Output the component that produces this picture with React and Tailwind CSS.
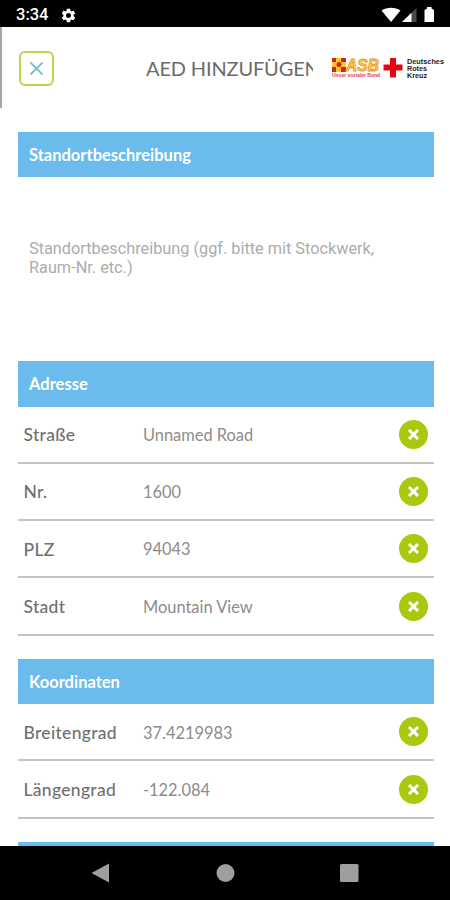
import React from "react";
import { MdSettings } from "react-icons/md";

const addressFields = [
    { label: "Straße", value: "Unnamed Road" },
    { label: "Nr.", value: "1600" },
    { label: "PLZ", value: "94043" },
    { label: "Stadt", value: "Mountain View" },
];

const coordinateFields = [
    { label: "Breitengrad", value: "37.4219983" },
    { label: "Längengrad", value: "-122.084" },
];

function StatusBar() {
    return (
        <div className="flex h-[27px] shrink-0 items-center justify-between bg-black pl-4 pr-[15px] text-white">
            <div className="flex items-center gap-[12px] pt-[3px]">
                <span className="font-['Roboto'] text-[16.500px] leading-none font-medium">3:34</span>
                <MdSettings className="h-[17px] w-[17px]" />
            </div>
            <svg width="54" height="18" viewBox="0 0 54 18" className="mt-[3px]">
                {/* WLAN */}
                <path d="M.5 4.500C6 .9 14 .9 19.500 4.500L10 16z" fill="#fff" />
                {/* Mobilfunk */}
                <path d="M21 16L35.500 2V16z" fill="#4a4a4a" />
                <path d="M21 16L30.500 6.800V16z" fill="#fff" />
                {/* Akku */}
                <path d="M43.500 4L46 2.500V1H50.500V2.500L53 4V16H43.500z" fill="#fff" />
            </svg>
        </div>
    );
}

function AsbLogo() {
    return (
        <svg width="50" height="24" viewBox="0 0 50 24">
            <rect x="1" y="2" width="14" height="14" fill="#d3241c" />
            <path d="M5 2h5v4h5v5h-5v5H5v-5H1V6h4z" fill="#f7c62c" />
            <circle cx="8" cy="8.500" r="2.500" fill="#d3241c" />
            <text
                x="15"
                y="15"
                textLength="33"
                lengthAdjust="spacingAndGlyphs"
                className="font-['Liberation_Sans'] text-[17px] leading-none font-bold italic"
                fill="#ffd83a"
                stroke="#e8923a"
                strokeWidth="0.9"
            >
                ASB
            </text>
            <text
                x="1"
                y="21"
                textLength="48"
                lengthAdjust="spacingAndGlyphs"
                className="font-['Liberation_Sans'] text-[5px] leading-none font-bold"
                fill="#d9444a"
            >
                Unser sozialer Bund
            </text>
        </svg>
    );
}

function DrkLogo() {
    return (
        <svg width="63" height="24" viewBox="0 0 63 24">
            <path d="M7 2h6v6.500h6.500v6H13V21.500H7v-7H.5v-6H7z" fill="#e30613" />
            <g className="font-['Liberation_Sans'] text-[7px] font-bold" fill="#222">
                <text x="24" y="7.500" textLength="37" lengthAdjust="spacingAndGlyphs">Deutsches</text>
                <text x="24" y="14.500" textLength="20" lengthAdjust="spacingAndGlyphs">Rotes</text>
                <text x="24" y="21.500" textLength="20" lengthAdjust="spacingAndGlyphs">Kreuz</text>
            </g>
        </svg>
    );
}

function Header() {
    return (
        <div className="flex h-[81px] shrink-0 items-center border-l-2 border-[#a6a6a6] bg-white">
            <button className="ml-[17px] mt-[1px] flex h-[35px] w-[35px] items-center justify-center rounded-[6px] border-2 border-[#bdd24f]">
                <svg width="13" height="13" viewBox="0 0 13 13" stroke="#6ab8d8" strokeWidth="1.600">
                    <path d="M.5.5l12 12M12.500.5l-12 12" />
                </svg>
            </button>
            <h1 className="ml-[92px] w-[167px] overflow-hidden whitespace-nowrap text-[20px] tracking-[-0.150px] text-[#6b6b6b]">
                AED HINZUFÜGEN
            </h1>
            <div className="ml-[18px] flex items-center">
                <AsbLogo />
                <div className="ml-[2px]">
                    <DrkLogo />
                </div>
            </div>
        </div>
    );
}

function SectionTitle({ children }) {
    return (
        <h2 className="flex h-[45.500px] items-center bg-[#6bbbed] pl-[11.500px] pt-[2px] text-[16.500px] font-bold text-white">
            {children}
        </h2>
    );
}

function FieldRow({ label, value }) {
    return (
        <div className="flex h-[57.300px] items-center border-b-2 border-[#c4c4c4] pl-[6px] pr-[6px]">
            <span className="w-[119.500px] pt-[2px] text-[17.500px] font-medium tracking-[0.300px] text-[#707070]">{label}</span>
            <span className="flex-1 pt-[2px] text-[16.400px] text-[#8c8c8c]">{value}</span>
            <button className="flex h-[29px] w-[29px] items-center justify-center rounded-full bg-[#a9c90e]">
                <svg width="11" height="11" viewBox="0 0 11 11" stroke="#fff" strokeWidth="3">
                    <path d="M1 1l9 9M10 1l-9 9" />
                </svg>
            </button>
        </div>
    );
}

function NavigationBar() {
    return (
        <div className="flex h-[54px] shrink-0 items-center justify-center bg-black">
            <svg width="270" height="20" viewBox="0 0 270 20" fill="#9e9e9e">
                <path d="M1.500 10L19 .5v19z" />
                <circle cx="135.500" cy="10" r="9" />
                <rect x="250" y="1" width="18.500" height="18" rx="1.500" />
            </svg>
        </div>
    );
}

export default function App() {
    return (
        <div className="flex h-[900px] w-[450px] flex-col overflow-hidden bg-white font-['Lato',sans-serif]">
            <StatusBar />
            <Header />
            <main className="min-h-0 flex-1 overflow-hidden pl-[17.500px] pr-[16.500px] pt-[23.500px]">
                <SectionTitle>Standortbeschreibung</SectionTitle>
                <p className="h-[184px] px-[11.500px] pt-[62px] font-['Roboto'] text-[16.300px] leading-[19px] text-[#acacac]">
                    Standortbeschreibung (ggf. bitte mit Stockwerk, Raum-Nr. etc.)
                </p>

                <SectionTitle>Adresse</SectionTitle>
                {addressFields.map((field) => (
                    <FieldRow key={field.label} {...field} />
                ))}

                <div className="mt-[23px]">
                    <SectionTitle>Koordinaten</SectionTitle>
                    {coordinateFields.map((field) => (
                        <FieldRow key={field.label} {...field} />
                    ))}
                </div>

                <div className="mt-[23px]">
                    <SectionTitle />
                </div>
            </main>
            <NavigationBar />
        </div>
    );
}
